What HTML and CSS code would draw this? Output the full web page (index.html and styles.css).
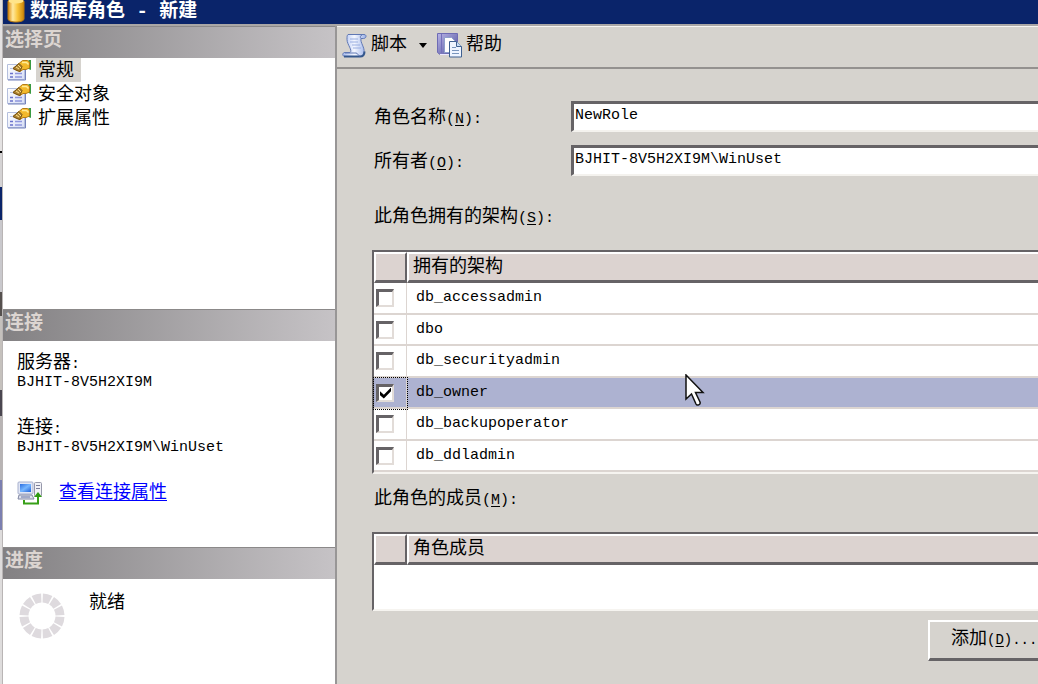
FILE: index.html
```html
<!DOCTYPE html>
<html lang="zh-CN">
<head>
<meta charset="utf-8">
<title>数据库角色 - 新建</title>
<link rel="stylesheet" href="styles.css">
</head>
<body>
<svg width="0" height="0" class="defs" aria-hidden="true">
  <defs>
    <linearGradient id="gold" x1="0" x2="1" y1="0" y2="0"><stop offset="0" stop-color="#d9860c"/><stop offset=".3" stop-color="#ffe9a0"/><stop offset=".6" stop-color="#f9c53c"/><stop offset="1" stop-color="#c98308"/></linearGradient>
    <linearGradient id="paper" x1="0" x2="1" y1="0" y2="1"><stop offset="0" stop-color="#fff"/><stop offset="1" stop-color="#d6ddf6"/></linearGradient>
    <linearGradient id="scroll" x1="0" x2="1" y1="0" y2="0"><stop offset="0" stop-color="#a9bdf0"/><stop offset=".5" stop-color="#f4f7ff"/><stop offset="1" stop-color="#9cb2e8"/></linearGradient>
    <linearGradient id="book" x1="0" x2="1" y1="0" y2="1"><stop offset="0" stop-color="#b9b4e6"/><stop offset="1" stop-color="#4e509c"/></linearGradient>
    <linearGradient id="screen" x1="0" x2="1" y1="0" y2="1"><stop offset="0" stop-color="#2a6de0"/><stop offset=".5" stop-color="#77b7ff"/><stop offset="1" stop-color="#1f5fd8"/></linearGradient>
    <symbol id="page" viewBox="0 0 24 21">
      <path d="M.5 4.500h17v15H.5z" fill="url(#paper)" stroke="#b4bfdd"/>
      <path d="M1 20h17.500V8" fill="none" stroke="#7482bd"/>
      <path d="M3 13.500h3M3 17h3" stroke="#6a72cc" stroke-width="1.500"/>
      <path d="M8 13.500h7M8 17h7" stroke="#8f96dd" stroke-width="1.500"/>
      <path d="M3 8.500h4" stroke="#b8c4e8"/>
      <path d="M21.500 0H24v10l-2.500-1z" fill="#3a9a42"/>
      <path d="M6 8.500l6-5L15.500.500h5L22.500 2v6L19 9.500h-3l-3 2-3-1z" fill="#f2b92b" stroke="#b57b14"/>
      <path d="M6 8.500l6-5 3 3-2 5-3-1z" fill="#ae8434" stroke="#765314"/>
      <path d="M9 7l3 2M11 5l3 3" stroke="#ffe28a"/>
      <path d="M15 2.500h4.500l2 2" fill="none" stroke="#ffeb95" stroke-width="1.500"/>
    </symbol>
  </defs>
</svg>
<div class="window">
  <div class="edge"></div>
  <div class="dialog">
    <header class="titlebar">
      <svg class="db" viewBox="0 0 18 24" width="18" height="24" aria-hidden="true"><path d="M1 1.500C1-1 17-1 17 1.500V19c0 4-16 4-16 0z" fill="url(#gold)" stroke="#b97a10"/><ellipse cx="9" cy="1" rx="7.500" ry="2.500" fill="#ffe48a"/></svg>
      <h1 class="title">数据库角色 - 新建</h1>
    </header>
    <div class="body">
      <aside class="side">
        <h2 class="band">选择页</h2>
        <nav class="pages">
          <a class="page" href="#general"><svg width="24" height="21"><use href="#page"/></svg><span class="name current">常规</span></a>
          <a class="page" href="#securables"><svg width="24" height="21"><use href="#page"/></svg><span class="name">安全对象</span></a>
          <a class="page" href="#extended"><svg width="24" height="21"><use href="#page"/></svg><span class="name">扩展属性</span></a>
        </nav>
        <h2 class="band">连接</h2>
        <section class="conn">
          <dl class="facts">
            <dt>服务器<span class="mono">:</span></dt><dd class="mono">BJHIT-8V5H2XI9M</dd>
            <dt>连接<span class="mono">:</span></dt><dd class="mono">BJHIT-8V5H2XI9M\WinUset</dd>
          </dl>
          <div class="props">
            <svg width="26" height="24" viewBox="0 0 26 24" aria-hidden="true">
              <rect x="17.500" y="1.500" width="7" height="14" rx="1" fill="#f1f1f6" stroke="#9799ab"/><path d="M19 4.500h4M19 7.500h4" stroke="#7c7f9b"/>
              <rect x="1" y="1" width="15" height="12" rx="1" fill="#e1e6f5" stroke="#a8b0cd"/><rect x="3" y="3" width="11" height="8" fill="url(#screen)"/>
              <path d="M2 14h13l2 4H1z" fill="#dfe2ec" stroke="#8288a4"/><path d="M4 16h9" stroke="#6672a3"/>
              <path d="M7 19v3.500h14V15" fill="none" stroke="#38a018" stroke-width="2"/><path d="M17 16l4-5 4 5z" fill="#2f9a12"/>
            </svg>
            <a class="link" href="#connection">查看连接属性</a>
          </div>
        </section>
        <h2 class="band">进度</h2>
        <section class="progress">
          <svg width="46" height="46" viewBox="-23 -23 46 46" aria-hidden="true"><circle r="18" fill="none" stroke="#dedade" stroke-width="9" pathLength="120" stroke-dasharray="8.400 1.600" stroke-dashoffset="-.8"/></svg>
          <span class="status">就绪</span>
        </section>
      </aside>
      <main class="main">
        <div class="toolbar">
          <button class="tool" type="button">
            <svg width="25" height="25" viewBox="0 0 25 25" aria-hidden="true"><path d="M6 1.500h16c3 0 2.500 4-.5 4H19c-1 4 4 9 3 14-.5 3-2 4-4 4H3c-3 0-3-4 0-4h5c3-2-3-8-3-13 0-3 0-4 1-5z" fill="url(#scroll)" stroke="#6078b4"/><path d="M2 23.500h16c3 0 4.500-2 4.500-5" fill="none" stroke="#34578c" stroke-width="2"/><path d="M3 20h11c2 0 2 3 4 3" fill="none" stroke="#6078b4"/><path d="M19 5.500c-1-1-1-3 1-3.500" fill="none" stroke="#6078b4"/><path d="M8 6h8M8 9h8M10 12h8M11 15h8" stroke="#9aaee0"/></svg>
            <span>脚本</span>
            <svg class="caret" width="8" height="5" viewBox="0 0 8 5" aria-hidden="true"><path d="M0 0h8L4 5z"/></svg>
          </button>
          <button class="tool" type="button">
            <svg width="25" height="25" viewBox="0 0 25 25" aria-hidden="true"><path d="M.5.500h20v21H3l-2.500-2z" fill="url(#book)" stroke="#6e6bb4"/><path d="M4.500 1v19" stroke="#7470bb"/><path d="M3 21.500h16" stroke="#ece9ff"/><path d="M7.500 4.500h7l3 3v12h-10z" fill="#fff" stroke="#8fa0cc"/><path d="M12.500 8.500h7l5 5v10.500h-12z" fill="#eef4ff" stroke="#3f6090"/><path d="M19.500 8.500v5h5" fill="#c8dcf5" stroke="#3f6090"/><path d="M15 14.500h4M15 17.500h7M15 20.500h7" stroke="#7995bd"/></svg>
            <span>帮助</span>
          </button>
        </div>
        <form class="form">
          <div class="field">
            <label for="role">角色名称<span class="mono">(<u>N</u>):</span></label>
            <input class="text" id="role" type="text" value="NewRole">
          </div>
          <div class="field">
            <label for="owner">所有者<span class="mono">(<u>O</u>):</span></label>
            <input class="text" id="owner" type="text" value="BJHIT-8V5H2XI9M\WinUset">
          </div>
          <p class="caption schemas">此角色拥有的架构<span class="mono">(<u>S</u>):</span></p>
          <div class="grid">
            <table class="table">
              <thead><tr><th class="pick"></th><th>拥有的架构</th></tr></thead>
              <tbody>
                <tr><td class="pick"><input class="check" id="s1" type="checkbox"></td><td><label for="s1">db_accessadmin</label></td></tr>
                <tr><td class="pick"><input class="check" id="s2" type="checkbox"></td><td><label for="s2">dbo</label></td></tr>
                <tr><td class="pick"><input class="check" id="s3" type="checkbox"></td><td><label for="s3">db_securityadmin</label></td></tr>
                <tr class="selected"><td class="pick"><input class="check" id="s4" type="checkbox" checked></td><td><label for="s4">db_owner</label></td></tr>
                <tr><td class="pick"><input class="check" id="s5" type="checkbox"></td><td><label for="s5">db_backupoperator</label></td></tr>
                <tr><td class="pick"><input class="check" id="s6" type="checkbox"></td><td><label for="s6">db_ddladmin</label></td></tr>
              </tbody>
            </table>
          </div>
          <p class="caption members">此角色的成员<span class="mono">(<u>M</u>):</span></p>
          <div class="grid empty">
            <table class="table">
              <thead><tr><th class="pick"></th><th>角色成员</th></tr></thead>
            </table>
          </div>
          <div class="actions"><button class="add" type="button">添加<span class="mono">(<u>D</u>)...</span></button></div>
        </form>
      </main>
    </div>
  </div>
  <svg class="pointer" width="20" height="33" viewBox="0 0 20 33" aria-hidden="true"><path d="M1 1v24l5.500-5 4.500 10c1 2 5 1 4-2l-4.500-9.500H18z" fill="#fff" stroke="#111" stroke-width="1.500"/></svg>
</div>
</body>
</html>
```
FILE: styles.css
```css
* { box-sizing: border-box; }
html, body { height: 100%; }
body {
  margin: 0;
  overflow: hidden;
  background: #d6d3ce;
  color: #000;
  font: 18px/24px "Liberation Mono", "Noto Sans CJK SC", monospace;
}
h1, h2, p, dl, dd { margin: 0; }
svg { display: block; flex: none; }
button, input { font: inherit; color: inherit; }
.defs { position: absolute; }
.mono { font-family: "Liberation Mono", monospace; font-size: 15px; }

.window { position: relative; display: flex; min-height: 100%; }
.edge {
  width: 3px;
  border-right: 1px solid #b9b5b5;
  background: linear-gradient(#e4e2e2 0 151px, #000 151px 153px, #d5d3d4 153px 187px, #0a246a 187px 220px, #c9c8cc 220px 292px, #55504e 292px 316px, #c5c1bd 316px 390px, #4a4650 390px 416px, #b8b4b4 416px 480px, #7b7fb0 480px 530px, #dedcdc 530px);
}
.dialog { flex: 1; min-width: 0; display: flex; flex-direction: column; }

.titlebar {
  display: flex;
  gap: 5px;
  height: 24px;
  padding-left: 4px;
  background: #0a246a;
  color: #fff;
}
.title { font-size: 19px; line-height: 24px; font-weight: 700; white-space: pre; }

.body { flex: 1; display: flex; border-top: 2px solid #aaa7a6; }
.side {
  width: 334px;
  flex: none;
  background: #fff;
  border-right: 2px solid #989696;
}
.band {
  height: 32px;
  padding-left: 2px;
  border-top: 1px solid #8b8989;
  background: linear-gradient(90deg, #838183, #c6c3c6);
  color: #dcd5d1;
  font-size: 19px;
  line-height: 29px;
  font-weight: 700;
}
.pages { height: 251px; padding: 0 4px; }
.page { display: flex; align-items: center; gap: 5px; height: 24px; color: inherit; text-decoration: none; }
.name { padding: 0 7px 0 2px; height: 24px; line-height: 26px; }
.current { background: #d6d3ce; }

.conn { height: 206px; padding: 10px 14px 0; }
.facts dt { line-height: 24px; }
.facts dd { line-height: 12px; margin-bottom: 27px; }
.props { display: flex; align-items: center; gap: 16px; }
.link { color: #00f; line-height: 24px; text-underline-offset: 2px; }
.progress { display: flex; gap: 24px; padding: 12px 16px; }
.progress svg { margin-top: 2px; }

.main { flex: 1; min-width: 0; border-top: 1px solid #f6f4f0; }
.toolbar {
  display: flex;
  gap: 10px;
  height: 42px;
  padding: 4px 5px 0;
  border-bottom: 2px solid #94918f;
}
.tool { display: flex; align-items: center; gap: 4px; height: 28px; padding: 0; border: 0; background: none; line-height: 26px; }
.caret { margin-left: 8px; }

.form { padding: 32px 0 0 35px; }
.field {
  display: grid;
  grid-template-columns: 197px 1fr;
  height: 44px;
  padding-left: 2px;
}
.field label { line-height: 34px; }
.text {
  width: 100%;
  height: 31px;
  padding: 0 1px 4px;
  border: solid;
  border-width: 3px 0 2px 3px;
  border-color: #666366 #fff #f4f2ee #666366;
  border-radius: 0;
  background: #fff;
  font-size: 15px;
  outline: 0;
}
.caption { padding-left: 2px; }
.schemas { margin: 16px 0 19px; }
.members { margin: 13px 0 19px; }
u { text-underline-offset: 2px; }

.grid { border: solid; border-width: 2px 0 2px 2px; border-color: #666366 #fff #f6f4f0 #666366; background: #fff; }
.empty { height: 79px; }
.table { width: 100%; border-collapse: separate; border-spacing: 0; table-layout: fixed; }
.table th {
  height: 31px;
  padding: 0 0 0 4px;
  border: solid;
  border-width: 2px 0 3px 2px;
  border-color: #fff #666366 #666366 #fff;
  background: #dcd3d0;
  text-align: left;
  font-weight: 400;
  line-height: 24px;
}
.table th.pick { width: 33px; border-right-width: 2px; }
.table td {
  height: 31px;
  padding: 0 0 0 9px;
  border-bottom: 2px solid #dcd5d1;
  font-size: 15px;
  line-height: 20px;
}
.table tr:nth-child(odd) td { height: 32px; }
.table td.pick { padding: 0 0 0 2px; border-right: 1px solid #dcd5d1; }
.table .selected td { background: #adb2d1; }
.table .selected td.pick { outline: 1px dotted #000; outline-offset: 0; }
.check {
  appearance: none;
  display: block;
  width: 18px;
  height: 18px;
  margin: 0;
  border: solid;
  border-width: 3px 2px 2px 3px;
  border-color: #666366 #e2dcd8 #e2dcd8 #666366;
  background: #fff;
}
.check:checked::before {
  content: "";
  display: block;
  width: 11px;
  height: 11px;
  margin: 1px;
  background: #000;
  clip-path: polygon(0 35%, 35% 65%, 100% 0, 100% 35%, 35% 100%, 0 70%);
}

.actions { display: flex; justify-content: flex-end; padding-top: 9px; }
.add {
  width: 110px;
  height: 41px;
  padding: 0 0 2px 21px;
  border: solid;
  border-width: 2px 0 3px 2px;
  border-color: #fff #666366 #666366 #fff;
  background: #d6d3ce;
  text-align: left;
  white-space: nowrap;
}
.add .mono { font-size: 14px; }
.pointer { position: absolute; left: 685px; top: 374px; }
```
